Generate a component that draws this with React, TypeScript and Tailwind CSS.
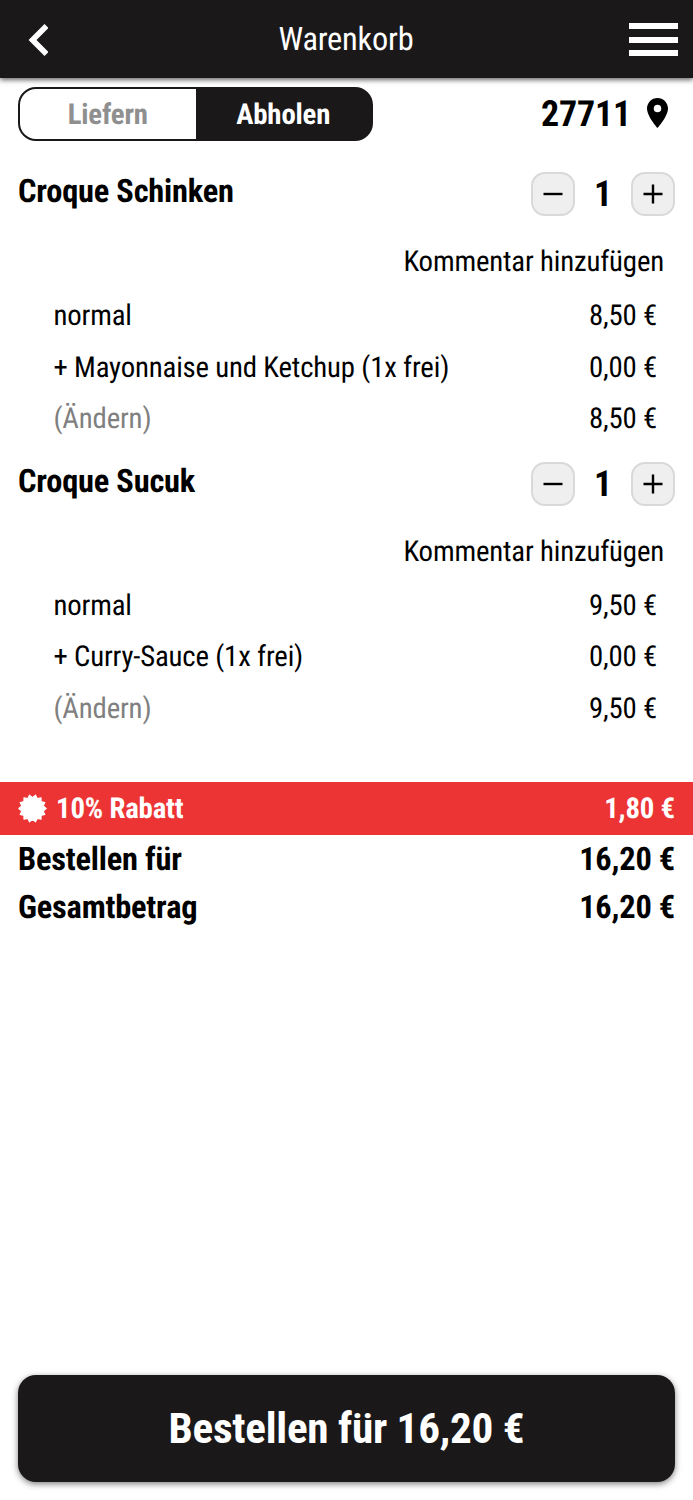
import { ReactNode } from "react";

interface Row {
    label: string
    price: string
    muted?: boolean
}

interface Product {
    name: string
    amount: number
    rows: Row[]
}

const products: Product[] = [
    {
        name: "Croque Schinken",
        amount: 1,
        rows: [
            { label: "normal", price: "8,50 €" },
            { label: "+ Mayonnaise und Ketchup (1x frei)", price: "0,00 €" },
            { label: "(Ändern)", price: "8,50 €", muted: true },
        ],
    },
    {
        name: "Croque Sucuk",
        amount: 1,
        rows: [
            { label: "normal", price: "9,50 €" },
            { label: "+ Curry-Sauce (1x frei)", price: "0,00 €" },
            { label: "(Ändern)", price: "9,50 €", muted: true },
        ],
    },
];

// 14 teeth, alternating between inner and outer radius
const badgePoints = Array.from({ length: 28 }, (_, i) => {
    const r = i % 2 ? 13.7 : 10.9;
    const a = (i * Math.PI) / 14;
    return `${(r * Math.sin(a)).toFixed(2)},${(-r * Math.cos(a)).toFixed(2)}`;
}).join(" ");

function StepButton({ label, children }: { label: string, children: ReactNode }) {
    return (
        <button aria-label={label} className="size-11 rounded-[14px] border-2 border-[#d9d9d9] bg-[#efefef] flex items-center justify-center">
            <svg viewBox="0 0 20 20" className="size-5 stroke-black" strokeWidth="2.4" fill="none">
                {children}
            </svg>
        </button>
    );
}

function CartItem({ product }: { product: Product }) {
    return (
        <section className="h-[289.6px]">
            <div className="flex justify-between px-[18px] h-[63px]">
                <h2 className="text-[32.4px] leading-[38px] font-bold">{product.name}</h2>
                <div className="flex items-start">
                    <StepButton label="weniger"><path d="M.5 10h19" /></StepButton>
                    <span className="w-14 text-center text-[36px] leading-[45px] font-bold">{product.amount}</span>
                    <StepButton label="mehr"><path d="M.5 10h19M10 .5v19" /></StepButton>
                </div>
            </div>
            <p className="text-right pr-[29px] h-[54.3px] leading-[55px]">Kommentar hinzufügen</p>
            {product.rows.map(r => (
                <div key={r.label} className="flex justify-between h-[51.5px] leading-[54px] pl-[53.5px] pr-9">
                    <span className={r.muted ? "text-[#808080]" : ""}>{r.label}</span>
                    <span>{r.price}</span>
                </div>
            ))}
        </section>
    );
}

export default function App() {
    return (
        <div className="w-[693px] h-[1500px] bg-white text-black flex flex-col text-[28.8px] font-['Roboto_Condensed','Roboto',sans-serif] [font-stretch:75%] [text-rendering:geometricPrecision] [&_*]:tracking-[-0.006em]">
            <header className="h-[78px] shrink-0 bg-[#1b1819] text-white flex items-center justify-between pl-7 pr-[15px] shadow-[0_2px_5px_rgba(0,0,0,0.6)]">
                <svg viewBox="0 0 20 32" className="w-5 h-8 mt-px fill-none stroke-white" strokeWidth="5.6">
                    <path d="M18.5 2 4.5 16l14 14" />
                </svg>
                <h1 className="text-[32.4px] ml-[15px]">Warenkorb</h1>
                <div className="w-[49px] h-[33px] mt-px flex flex-col justify-between">
                    <span className="h-[6px] bg-white" />
                    <span className="h-[6px] bg-white" />
                    <span className="h-[6px] bg-white" />
                </div>
            </header>

            <div className="flex items-start justify-between mt-[9px] h-[54px] pl-[18px] pr-[25px]">
                <div className="flex w-[355px] h-[53.5px] rounded-[18px] border-2 border-[#1b1819] bg-[linear-gradient(to_right,white_176px,#1b1819_176px)] font-bold leading-[53px] text-center">
                    <span className="flex-1 text-[#8f8f8f]">Liefern</span>
                    <span className="flex-1 text-white">Abholen</span>
                </div>
                <div className="flex items-center gap-4 h-[54px]">
                    <span className="text-[36px] leading-[54px] font-bold">27711</span>
                    <svg viewBox="5 2 14 20" className="w-[21px] h-[30px] mb-[2px] fill-black">
                        <path d="M12 2C8.13 2 5 5.13 5 9c0 5.25 7 13 7 13s7-7.75 7-13c0-3.87-3.13-7-7-7zm0 9.5a2.5 2.5 0 1 1 0-5 2.5 2.5 0 0 1 0 5z" />
                    </svg>
                </div>
            </div>

            <main className="mt-[31px]">
                {products.map(p => <CartItem key={p.name} product={p} />)}
            </main>

            <div className="mt-[31px] h-[53px] leading-[54px] bg-[#ed3434] text-white font-bold flex items-center justify-between px-[18px]">
                <div className="flex items-center gap-[9px]">
                    <svg viewBox="-14.5 -14.5 29 29" className="size-[29px] fill-white stroke-white" strokeWidth="1.2" strokeLinejoin="round">
                        <polygon points={badgePoints} />
                    </svg>
                    <span>10% Rabatt</span>
                </div>
                <span>1,80 €</span>
            </div>

            <div className="flex justify-between px-[18px] text-[32.4px] leading-[48px] font-bold">
                <span>Bestellen für</span>
                <span>16,20 €</span>
            </div>
            <div className="flex justify-between px-[18px] text-[32.4px] leading-[48px] font-bold">
                <span>Gesamtbetrag</span>
                <span>16,20 €</span>
            </div>

            <button className="mt-auto mb-[18px] mx-[18px] h-[107px] pt-[2px] shrink-0 rounded-[18px] bg-[#1b1819] text-white text-[43.2px] font-bold shadow-[0_2px_6px_rgba(0,0,0,0.5)]">
                Bestellen für 16,20 €
            </button>
        </div>
    );
}
